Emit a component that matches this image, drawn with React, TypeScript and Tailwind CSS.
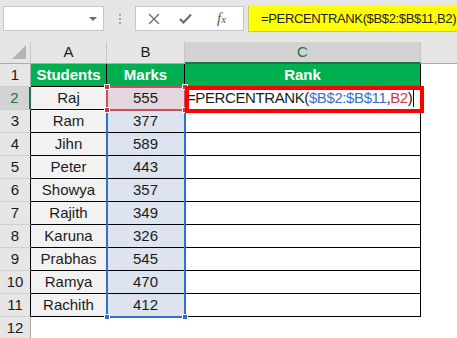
import React from 'react';

type Row = { n: number; name: string; mark: string };

const rows: Row[] = [
  { n: 2, name: 'Raj', mark: '555' },
  { n: 3, name: 'Ram', mark: '377' },
  { n: 4, name: 'Jihn', mark: '589' },
  { n: 5, name: 'Peter', mark: '443' },
  { n: 6, name: 'Showya', mark: '357' },
  { n: 7, name: 'Rajith', mark: '349' },
  { n: 8, name: 'Karuna', mark: '326' },
  { n: 9, name: 'Prabhas', mark: '545' },
  { n: 10, name: 'Ramya', mark: '470' },
  { n: 11, name: 'Rachith', mark: '412' },
];

const Handle: React.FC<{ x: number; y: number; color: string }> = ({ x, y, color }) => (
  <div
    className="absolute w-[6px] h-[6px] border border-white z-10"
    style={{ left: x - 3, top: y - 3, backgroundColor: color }}
  />
);

const Formula: React.FC = () => (
  <span className="relative z-30">
    <span>=PERCENTRANK(</span>
    <span className="text-[#3b6fc8]">$B$2:$B$11</span>
    <span>,</span>
    <span className="text-[#c63a4a]">B2</span>
    <span>)</span>
  </span>
);

const App: React.FC = () => {
  return (
    <div className="w-[457px] h-[338px] overflow-hidden bg-white text-[#1b1b1b] font-['Liberation_Sans',Arial,sans-serif]">
      {/* formula bar */}
      <div className="h-[42px] bg-[#e6e6e6] flex items-start pt-[6px] pl-[3px]">
        <div className="w-[101px] h-[25px] bg-white border border-[#c6c6c6] flex items-center justify-end pr-[6px]">
          <div className="w-0 h-0 border-l-[4px] border-r-[4px] border-t-[4px] border-l-transparent border-r-transparent border-t-[#6b6b6b]" />
        </div>
        <div className="w-[31px] flex flex-col items-center gap-[2px] pt-[8px]">
          <div className="w-[2px] h-[2px] bg-[#a6a6a6]" />
          <div className="w-[2px] h-[2px] bg-[#a6a6a6]" />
          <div className="w-[2px] h-[2px] bg-[#a6a6a6]" />
        </div>
        <div className="w-[109px] h-[25px] bg-white border border-[#c6c6c6] flex items-center pl-[12px]">
          <svg width="12" height="12" viewBox="0 0 12 12" className="mr-[19px]">
            <path d="M1 1L11 11M11 1L1 11" stroke="#6e6e6e" strokeWidth="1.4" fill="none" />
          </svg>
          <svg width="13" height="11" viewBox="0 0 13 11" className="mr-[25px]">
            <path d="M1 6L4.5 9.5L12 1.5" stroke="#6e6e6e" strokeWidth="2.2" fill="none" />
          </svg>
          <span className="font-['Liberation_Serif',serif] italic text-[15px] text-[#555] leading-none">
            f<span className="text-[11px]">x</span>
          </span>
        </div>
        <div className="ml-[4px] flex-1 h-[26px] bg-[#ffff00] border-b border-l border-[#c9c96a] flex items-center pl-[12px] text-[13px] tracking-[-0.35px] text-[#222]">
          =PERCENTRANK($B$2:$B$11,B2)
        </div>
      </div>

      {/* column headers */}
      <div className="h-[22px] flex bg-[#e6e6e6] text-[15px]">
        <div className="w-[31px] shrink-0 border-r border-b border-[#c6c6c6] border-b-[#ababab] relative">
          <div className="absolute right-[4px] bottom-[4px] w-0 h-0 border-b-[14px] border-l-[14px] border-b-[#b4b4b4] border-l-transparent" />
        </div>
        <div className="w-[76px] shrink-0 border-r border-b border-[#c6c6c6] border-b-[#ababab] flex items-center justify-center">A</div>
        <div className="w-[78px] shrink-0 border-r border-b border-[#c6c6c6] border-b-[#ababab] flex items-center justify-center">B</div>
        <div className="w-[236px] shrink-0 bg-[#d3d3d3] border-r border-[#c6c6c6] border-b-2 border-b-[#217346] flex items-center justify-center text-[#217346]">C</div>
        <div className="flex-1 border-b border-[#ababab]" />
      </div>

      {/* grid body */}
      <div className="relative text-[15px]">
        {/* row 1 */}
        <div className="h-[23px] flex">
          <div className="w-[31px] shrink-0 bg-[#e6e6e6] border-b border-[#d0d0d0] border-r border-r-[#ababab] flex items-center justify-center">1</div>
          <div className="w-[76px] shrink-0 bg-[#00b050] border-b border-r border-black flex items-center justify-center text-white font-bold">Students</div>
          <div className="w-[78px] shrink-0 bg-[#00b050] border-b border-r border-black flex items-center justify-center text-white font-bold">Marks</div>
          <div className="w-[236px] shrink-0 bg-[#00b050] border-b border-r border-black flex items-center justify-center text-white font-bold">Rank</div>
          <div className="flex-1" />
        </div>

        {rows.map((r) => {
          const active = r.n === 2;
          return (
            <div key={r.n} className="h-[23px] flex">
              <div
                className={`w-[31px] shrink-0 border-b border-[#d0d0d0] flex items-center justify-center ${
                  active ? 'bg-[#d3d3d3] text-[#217346] border-r-2 border-r-[#217346]' : 'bg-[#e6e6e6] border-r border-r-black'
                }`}
              >
                {r.n}
              </div>
              <div className="w-[76px] shrink-0 bg-[#f2f2f2] border-b border-r border-black flex items-center justify-center">{r.name}</div>
              <div
                className={`w-[78px] shrink-0 border-b border-r border-black flex items-center justify-center ${
                  active ? 'bg-[#e3d6de]' : 'bg-[#dde4ef]'
                }`}
              >
                {r.mark}
              </div>
              <div className="w-[236px] shrink-0 bg-white border-b border-r border-black flex items-center pl-[2px] whitespace-nowrap tracking-[-0.4px]">
                {active && <Formula />}
              </div>
              <div className="flex-1" />
            </div>
          );
        })}

        {/* row 12 */}
        <div className="h-[23px] flex">
          <div className="w-[31px] shrink-0 bg-[#e6e6e6] border-b border-[#d0d0d0] border-r border-r-[#ababab] flex items-center justify-center">12</div>
          <div className="flex-1" />
        </div>

        {/* selection of B2:B11 */}
        <div className="absolute left-[106px] top-[22px] w-[80px] h-[232px] border-2 border-[#2f6fcf]" />
        <div className="absolute left-[106px] top-[22px] w-[80px] h-[25px] border-2 border-[#c8505e]" />
        <Handle x={107} y={23} color="#c23b4c" />
        <Handle x={185} y={23} color="#c23b4c" />
        <Handle x={107} y={46} color="#c23b4c" />
        <Handle x={185} y={46} color="#c23b4c" />
        <Handle x={107} y={253} color="#2f6fcf" />
        <Handle x={185} y={253} color="#2f6fcf" />

        {/* red callout box around C2 */}
        <div className="absolute left-[185px] top-[22px] w-[239px] h-[27px] border-4 border-[#ff0000] z-20" />
        <div className="absolute left-[413px] top-[26px] w-px h-[17px] bg-black z-30" />
      </div>
    </div>
  );
};

export default App;
